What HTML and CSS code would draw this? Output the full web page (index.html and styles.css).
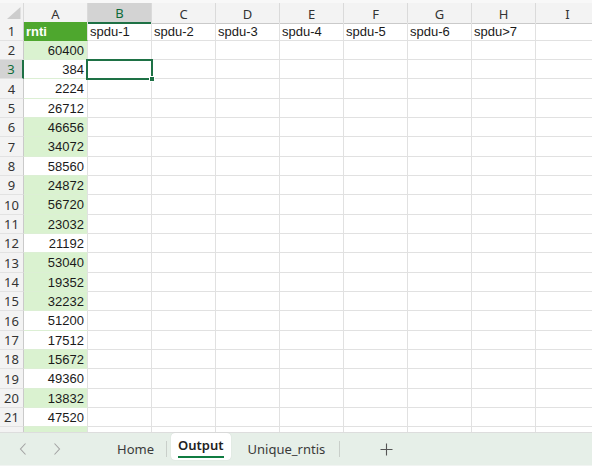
FILE: index.html
```html
<!DOCTYPE html>
<html>
<head>
<meta charset="utf-8">
<link rel="stylesheet" href="styles.css">
</head>
<body>
<div class="app">
  <div class="sheet">
    <div class="strip"></div>
    <div class="row head">
      <div class="corner"><svg width="24" height="18" viewBox="0 0 24 18"><polygon points="20.5,4 20.5,16 7,16" fill="#cdcdcd"/></svg></div>
      <div class="ch">A</div><div class="ch sel">B</div><div class="ch">C</div><div class="ch">D</div><div class="ch">E</div><div class="ch">F</div><div class="ch">G</div><div class="ch">H</div><div class="ch">I</div>
    </div>
    <div class="row"><div class="rh">1</div><div class="c th">rnti</div><div class="c">spdu-1</div><div class="c">spdu-2</div><div class="c">spdu-3</div><div class="c">spdu-4</div><div class="c">spdu-5</div><div class="c">spdu-6</div><div class="c">spdu&gt;7</div><div class="c"></div></div>
    <div class="row"><div class="rh">2</div><div class="c n g">60400</div><div class="c"></div><div class="c"></div><div class="c"></div><div class="c"></div><div class="c"></div><div class="c"></div><div class="c"></div><div class="c"></div></div>
    <div class="row"><div class="rh sel">3</div><div class="c n">384</div><div class="c"></div><div class="c"></div><div class="c"></div><div class="c"></div><div class="c"></div><div class="c"></div><div class="c"></div><div class="c"></div></div>
    <div class="row tall"><div class="rh">4</div><div class="c n">2224</div><div class="c"></div><div class="c"></div><div class="c"></div><div class="c"></div><div class="c"></div><div class="c"></div><div class="c"></div><div class="c"></div></div>
    <div class="row"><div class="rh">5</div><div class="c n">26712</div><div class="c"></div><div class="c"></div><div class="c"></div><div class="c"></div><div class="c"></div><div class="c"></div><div class="c"></div><div class="c"></div></div>
    <div class="row"><div class="rh">6</div><div class="c n g">46656</div><div class="c"></div><div class="c"></div><div class="c"></div><div class="c"></div><div class="c"></div><div class="c"></div><div class="c"></div><div class="c"></div></div>
    <div class="row tall"><div class="rh">7</div><div class="c n g">34072</div><div class="c"></div><div class="c"></div><div class="c"></div><div class="c"></div><div class="c"></div><div class="c"></div><div class="c"></div><div class="c"></div></div>
    <div class="row"><div class="rh">8</div><div class="c n">58560</div><div class="c"></div><div class="c"></div><div class="c"></div><div class="c"></div><div class="c"></div><div class="c"></div><div class="c"></div><div class="c"></div></div>
    <div class="row"><div class="rh">9</div><div class="c n g">24872</div><div class="c"></div><div class="c"></div><div class="c"></div><div class="c"></div><div class="c"></div><div class="c"></div><div class="c"></div><div class="c"></div></div>
    <div class="row tall"><div class="rh">10</div><div class="c n g">56720</div><div class="c"></div><div class="c"></div><div class="c"></div><div class="c"></div><div class="c"></div><div class="c"></div><div class="c"></div><div class="c"></div></div>
    <div class="row"><div class="rh">11</div><div class="c n g">23032</div><div class="c"></div><div class="c"></div><div class="c"></div><div class="c"></div><div class="c"></div><div class="c"></div><div class="c"></div><div class="c"></div></div>
    <div class="row"><div class="rh">12</div><div class="c n">21192</div><div class="c"></div><div class="c"></div><div class="c"></div><div class="c"></div><div class="c"></div><div class="c"></div><div class="c"></div><div class="c"></div></div>
    <div class="row tall"><div class="rh">13</div><div class="c n g">53040</div><div class="c"></div><div class="c"></div><div class="c"></div><div class="c"></div><div class="c"></div><div class="c"></div><div class="c"></div><div class="c"></div></div>
    <div class="row"><div class="rh">14</div><div class="c n g">19352</div><div class="c"></div><div class="c"></div><div class="c"></div><div class="c"></div><div class="c"></div><div class="c"></div><div class="c"></div><div class="c"></div></div>
    <div class="row"><div class="rh">15</div><div class="c n g">32232</div><div class="c"></div><div class="c"></div><div class="c"></div><div class="c"></div><div class="c"></div><div class="c"></div><div class="c"></div><div class="c"></div></div>
    <div class="row tall"><div class="rh">16</div><div class="c n">51200</div><div class="c"></div><div class="c"></div><div class="c"></div><div class="c"></div><div class="c"></div><div class="c"></div><div class="c"></div><div class="c"></div></div>
    <div class="row"><div class="rh">17</div><div class="c n">17512</div><div class="c"></div><div class="c"></div><div class="c"></div><div class="c"></div><div class="c"></div><div class="c"></div><div class="c"></div><div class="c"></div></div>
    <div class="row"><div class="rh">18</div><div class="c n g">15672</div><div class="c"></div><div class="c"></div><div class="c"></div><div class="c"></div><div class="c"></div><div class="c"></div><div class="c"></div><div class="c"></div></div>
    <div class="row tall"><div class="rh">19</div><div class="c n">49360</div><div class="c"></div><div class="c"></div><div class="c"></div><div class="c"></div><div class="c"></div><div class="c"></div><div class="c"></div><div class="c"></div></div>
    <div class="row"><div class="rh">20</div><div class="c n g">13832</div><div class="c"></div><div class="c"></div><div class="c"></div><div class="c"></div><div class="c"></div><div class="c"></div><div class="c"></div><div class="c"></div></div>
    <div class="row"><div class="rh">21</div><div class="c n">47520</div><div class="c"></div><div class="c"></div><div class="c"></div><div class="c"></div><div class="c"></div><div class="c"></div><div class="c"></div><div class="c"></div></div>
    <div class="row"><div class="rh">22</div><div class="c n g">45680</div><div class="c"></div><div class="c"></div><div class="c"></div><div class="c"></div><div class="c"></div><div class="c"></div><div class="c"></div><div class="c"></div></div>
    <div class="selbox"><span class="handle"></span></div>
  </div>
  <div class="tabs">
    <div class="nav">
      <svg width="8" height="12" viewBox="0 0 8 12"><polyline points="6.5,0.5 1.5,6 6.5,11.5" fill="none" stroke="#a3a3a3" stroke-width="1.1"/></svg>
      <svg width="8" height="12" viewBox="0 0 8 12"><polyline points="1.5,0.5 6.5,6 1.5,11.5" fill="none" stroke="#a3a3a3" stroke-width="1.1"/></svg>
    </div>
    <div class="tab home">Home</div>
    <div class="sep"></div>
    <div class="tab active"><span class="lbl">Output</span></div>
    <div class="tab uniq">Unique_rntis</div>
    <div class="sep"></div>
    <div class="add"><svg width="13" height="13" viewBox="0 0 13 13"><path d="M6.5 0.5V12.5M0.5 6.5H12.5" stroke="#555" stroke-width="1.1"/></svg></div>
  </div>
</div>
</body>
</html>
```
FILE: styles.css
```css
* { box-sizing: border-box; }
html, body { margin: 0; padding: 0; }
body {
  width: 592px;
  height: 466px;
  overflow: hidden;
  background: #fff;
  font-family: "Liberation Sans", Arial, sans-serif;
}
.app {
  display: flex;
  flex-direction: column;
  height: 466px;
}
.sheet {
  position: relative;
  flex: 1;
  min-height: 0;
  overflow: hidden;
}
.strip {
  height: 3px;
  background: #f8f8f8;
}
.row {
  display: grid;
  grid-template-columns: 24px repeat(9, 64px);
  height: 19px;
}
.row.tall { height: 20px; }
.head { height: 19px; }
.head > div {
  background: #f3f3f3;
  border-right: 1px solid #dadada;
  border-bottom: 1px solid #cacaca;
  font-family: "Noto Sans", sans-serif;
  font-size: 13px;
  color: #333;
  display: flex;
  align-items: center;
  justify-content: center;
  padding-top: 1px;
}
.head > .corner { display: block; padding: 0; }
.corner svg { display: block; }
.head > .ch.sel {
  background: #d3d3d3;
  color: #0f6b39;
  border-bottom: 2px solid #1e7145;
}
.rh {
  background: #f3f3f3;
  border-right: 1px solid #cacaca;
  border-bottom: 1px solid #e2e2e2;
  font-family: "Noto Sans", sans-serif;
  font-size: 13px;
  color: #333;
  display: flex;
  align-items: center;
  justify-content: center;
}
.rh.sel {
  background: #d3d3d3;
  color: #0f6b39;
  border-right: 2px solid #1e7145;
}
.c {
  border-right: 1px solid #e1e1e1;
  border-bottom: 1px solid #e1e1e1;
  font-size: 13px;
  color: #1a1a1a;
  display: flex;
  align-items: center;
  padding-left: 2px;
  white-space: nowrap;
  overflow: hidden;
}
.c.n {
  justify-content: flex-end;
  padding: 0 3px 0 0;
  border-bottom-color: #dcefd4;
}
.c.g { background: #daf2d0; }
.c.th {
  background: #4ea72e;
  color: #fff;
  font-weight: bold;
  border-bottom-color: #4ea72e;
}
.selbox {
  position: absolute;
  left: 86px;
  top: 59px;
  width: 67px;
  height: 21px;
  border: 2px solid #1e7145;
}
.handle {
  position: absolute;
  right: -4px;
  bottom: -4px;
  width: 6px;
  height: 6px;
  background: #1e7145;
  border: 1px solid #fff;
}
.tabs {
  flex: none;
  height: 34px;
  background: #e6efe8;
  border-top: 1px solid #dddddd;
  border-bottom: 1px solid #f1f4f2;
  display: flex;
  align-items: center;
  font-family: "Noto Sans", sans-serif;
  font-size: 13px;
  color: #3a3a3a;
}
.nav {
  width: 99px;
  display: flex;
  align-items: center;
  gap: 26px;
  padding-left: 19px;
}
.nav svg { display: block; }
.tab { white-space: nowrap; }
.home { padding: 0 12px 0 18px; }
.sep {
  width: 1px;
  height: 16px;
  background: #c9cfca;
}
.tab.active {
  align-self: flex-start;
  margin: 0 0 0 4px;
  height: 27px;
  padding: 3px 7px 0;
  background: #fff;
  border-radius: 4px;
  box-shadow: 0 0 1px rgba(0,0,0,0.18);
  color: #222;
  font-weight: 600;
}
.lbl {
  display: block;
  line-height: 18px;
  padding-bottom: 2px;
  border-bottom: 2px solid #107c41;
}
.uniq { padding: 0 14px 0 17px; }
.add { margin-left: 40px; }
.add svg { display: block; }
```
